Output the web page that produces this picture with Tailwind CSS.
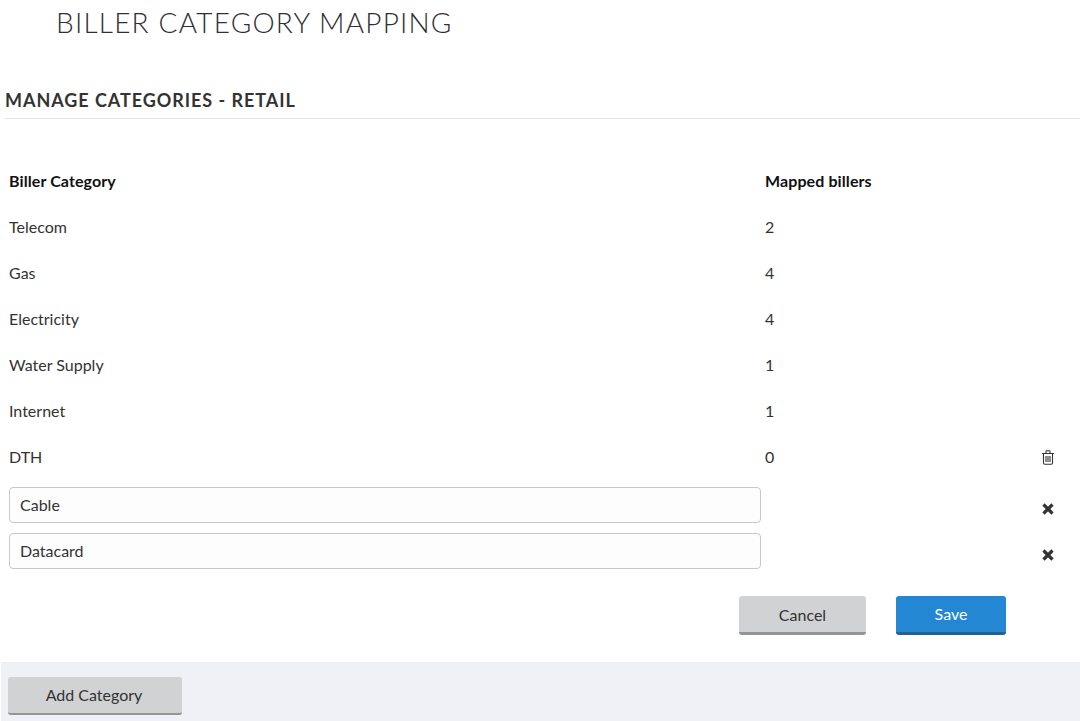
<!DOCTYPE html>
<html lang="en">
<head>
  <meta charset="UTF-8" />
  <meta name="viewport" content="width=device-width, initial-scale=1.0" />
  <title>Biller Category Mapping</title>
  <script src="https://cdn.jsdelivr.net/npm/@tailwindcss/browser@4"></script>
</head>
<body class="bg-white font-['Lato',sans-serif] text-[16px] text-[#333] h-[721px] overflow-hidden">

<h1 class="h-[46px] pl-[56px] pt-[4px] text-[28px] leading-[36px] font-light tracking-[1.2px] text-[#2f2f35]">BILLER CATEGORY MAPPING</h1>

<div class="ml-[5px] mt-[42px] h-[31px] border-b border-[#e5e5e5]">
  <h2 class="text-[18px] leading-[24px] font-bold tracking-[0.95px] text-[#333]">MANAGE CATEGORIES - RETAIL</h2>
</div>

<!-- category table -->
<div class="mt-[39px] pl-[9px]">
  <div class="flex items-center h-[46px] font-bold tracking-[0.1px] text-[#111]">
    <div class="w-[756px]">Biller Category</div>
    <div>Mapped billers</div>
  </div>
  <div class="flex items-center h-[46px]"><div class="w-[756px]">Telecom</div><div>2</div></div>
  <div class="flex items-center h-[46px]"><div class="w-[756px]">Gas</div><div>4</div></div>
  <div class="flex items-center h-[46px]"><div class="w-[756px]">Electricity</div><div>4</div></div>
  <div class="flex items-center h-[46px]"><div class="w-[756px]">Water Supply</div><div>1</div></div>
  <div class="flex items-center h-[46px]"><div class="w-[756px]">Internet</div><div>1</div></div>
  <div class="flex items-center h-[46px]">
    <div class="w-[756px]">DTH</div>
    <div class="flex-1">0</div>
    <svg class="mr-[25px]" width="14" height="15" viewBox="0 0 14 15" fill="none" stroke="#333" stroke-width="1.1">
      <path d="M1 3.5h12M2.5 3.5v9.5a1.2 1.2 0 0 0 1.2 1.2h6.6a1.2 1.2 0 0 0 1.2-1.2V3.5M5 3.3V1.6a.8.8 0 0 1 .8-.8h2.4a.8.8 0 0 1 .8.8v1.7M5 6v6M7 6v6M9 6v6" />
    </svg>
  </div>

  <div class="mt-[7px] flex items-center h-[36px]">
    <input type="text" value="Cable" class="w-[752px] h-[36px] px-[10px] pb-[2px] bg-[#fdfdfd] border border-[#c8c8c8] rounded-[4px] text-[16px] text-[#333]">
    <svg class="ml-auto mr-[26px] mt-[7px]" width="12" height="12" viewBox="0 0 12 12" fill="none" stroke="#333" stroke-width="3.2">
      <path d="M1.5 1.5l9 9M10.5 1.5l-9 9" />
    </svg>
  </div>
  <div class="mt-[10px] flex items-center h-[36px]">
    <input type="text" value="Datacard" class="w-[752px] h-[36px] px-[10px] pb-[2px] bg-[#fdfdfd] border border-[#c8c8c8] rounded-[4px] text-[16px] text-[#333]">
    <svg class="ml-auto mr-[26px] mt-[8px]" width="12" height="12" viewBox="0 0 12 12" fill="none" stroke="#333" stroke-width="3.2">
      <path d="M1.5 1.5l9 9M10.5 1.5l-9 9" />
    </svg>
  </div>
</div>

<div class="mt-[27px] flex justify-end gap-[30px] pr-[74px]">
  <button class="w-[127px] h-[39px] bg-[#d1d2d4] border-b-[3px] border-[#959595] rounded-[3px] pt-[2px] text-[16px] text-[#333]">Cancel</button>
  <button class="w-[110px] h-[39px] bg-[#2487d4] border-b-[3px] border-[#26608f] rounded-[3px] text-[16px] text-white">Save</button>
</div>

<div class="ml-px mt-[27px] h-[59px] bg-[#f0f1f6] pt-[15px] pl-[7px]">
  <button class="w-[174px] h-[38px] bg-[#d1d2d4] border-b-[2px] border-[#959595] rounded-[3px] pr-[2px] text-[16px] text-[#333]">Add Category</button>
</div>

</body>
</html>
